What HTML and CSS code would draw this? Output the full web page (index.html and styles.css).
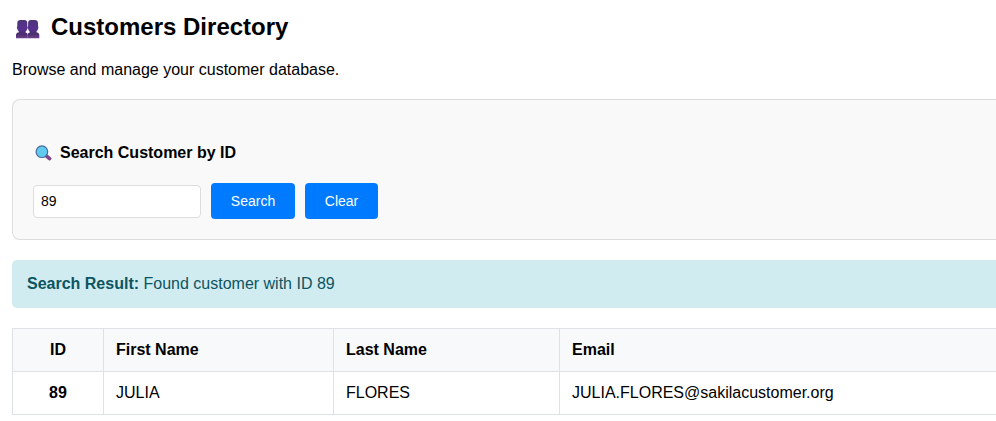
FILE: index.html
```html
<!DOCTYPE html>
<html lang="en">
<head>
<meta charset="utf-8">
<title>Customers Directory</title>
<link rel="stylesheet" href="styles.css">
</head>
<body>
<main class="page">
  <h1 class="title">
    <svg class="people" viewBox="0 0 24 20" aria-hidden="true">
      <defs><linearGradient id="bust" x1="0" y1="0" x2="0" y2="1"><stop offset="0" stop-color="#4b3477"/><stop offset=".5" stop-color="#593192"/><stop offset=".75" stop-color="#4a2d6e"/><stop offset="1" stop-color="#6c3f8c"/></linearGradient></defs>
      <path fill="url(#bust)" d="M4.500 1h3.800c2 0 3 1.200 3 3.200v3c.6.400.5 2.600-.1 2.900-.3 1.300-.9 2.100-1.700 2.700v.6c1.400.3 2.300 1 2.300 2.700v3.200H0v-3.200c0-1.700 1-2.500 3-2.800v-.5c-.8-.6-1.300-1.400-1.600-2.700-.6-.3-.7-2.500-.1-2.900v-3C1.300 2.200 2.500 1 4.500 1z"/>
      <path fill="url(#bust)" d="M15 1h3.800c2 0 3.200 1.200 3.200 3.200v3c.6.400.5 2.600-.1 2.900-.3 1.300-.8 2.100-1.600 2.700v.5c2 .3 3 1.100 3 2.800v3.200H11.800v-3.200c0-1.700.7-2.400 2-2.700v-.6c-.8-.6-1.300-1.400-1.600-2.700-.6-.3-.7-2.500-.1-2.900v-3C12.100 2.200 13 1 15 1z"/>
    </svg>
    <span>Customers Directory</span>
  </h1>
  <p class="intro">Browse and manage your customer database.</p>
  <section class="search-card">
    <h2 class="subtitle">
      <svg class="lens" viewBox="0 0 17 16" aria-hidden="true">
        <path d="M11.300 10.800l3.300 2.800" stroke="#82468c" stroke-width="3.600" stroke-linecap="round"/>
        <circle cx="6.900" cy="6.700" r="5.800" fill="#61cbed" stroke="#49699e" stroke-width="1.200"/>
      </svg>
      <span>Search Customer by ID</span>
    </h2>
    <form class="search-form">
      <input class="field" type="text" value="89" aria-label="Customer ID">
      <button class="btn" type="button">Search</button>
      <button class="btn btn-clear" type="button">Clear</button>
    </form>
  </section>
  <div class="result"><strong>Search Result:</strong> Found customer with ID 89</div>
  <table class="customers">
    <colgroup><col class="c-id"><col class="c-first"><col class="c-last"><col></colgroup>
    <thead><tr><th class="id">ID</th><th>First Name</th><th>Last Name</th><th>Email</th></tr></thead>
    <tbody><tr><td class="id">89</td><td>JULIA</td><td>FLORES</td><td>JULIA.FLORES@sakilacustomer.org</td></tr></tbody>
  </table>
</main>
</body>
</html>
```
FILE: styles.css
```css
* { box-sizing: border-box; }
body {
  margin: 0;
  background: #fff;
  color: #000;
  font: 16px/18px "Liberation Sans", Arial, sans-serif;
}
.page { padding: 12px 0 0 12px; }
.title {
  display: flex;
  align-items: center;
  gap: 11px;
  height: 30px;
  margin: 0 0 19px;
  padding-left: 4px;
  font-size: 24px;
  line-height: 30px;
}
.people { width: 24px; height: 20px; margin-top: 4px; }
.intro { margin: 0 0 20px; }
.search-card {
  height: 141px;
  margin-bottom: 20px;
  padding: 44px 20px 20px;
  border: 1px solid #ddd;
  border-right: 0;
  border-radius: 8px 0 0 8px;
  background: #f9f9f9;
}
.subtitle {
  display: flex;
  align-items: center;
  gap: 8px;
  margin: 0 0 21px;
  padding-left: 2px;
  font-size: 16px;
  line-height: 18px;
}
.lens { width: 17px; height: 16px; margin-bottom: 1px; }
.search-form { display: flex; align-items: center; gap: 10px; height: 36px; }
.field {
  width: 168px;
  height: 33px;
  margin-top: 1px;
  padding: 0 8px 2px 7px;
  border: 1px solid #ddd;
  border-radius: 4px;
  background: #fff;
  color: #000;
  font: 14px "Liberation Sans", Arial, sans-serif;
}
.btn {
  width: 84px;
  height: 36px;
  padding: 0;
  border: 0;
  border-radius: 4px;
  background: #007bff;
  color: #fff;
  font: 14px "Liberation Sans", Arial, sans-serif;
}
.btn-clear { width: 73px; }
.result {
  height: 48px;
  margin-bottom: 20px;
  padding: 15px;
  border-radius: 5px 0 0 5px;
  background: #d1ecf1;
  color: #0c5460;
}
.customers { width: 100%; border-collapse: collapse; table-layout: fixed; }
.c-id { width: 91px; }
.c-first { width: 230px; }
.c-last { width: 226px; }
.customers th, .customers td {
  height: 43px;
  padding: 0 12px;
  border: 1px solid #dee2e6;
  text-align: left;
}
.customers th:last-child, .customers td:last-child { border-right: 0; }
.customers th { background: #f8f9fa; }
.customers .id { text-align: center; font-weight: bold; }
```
